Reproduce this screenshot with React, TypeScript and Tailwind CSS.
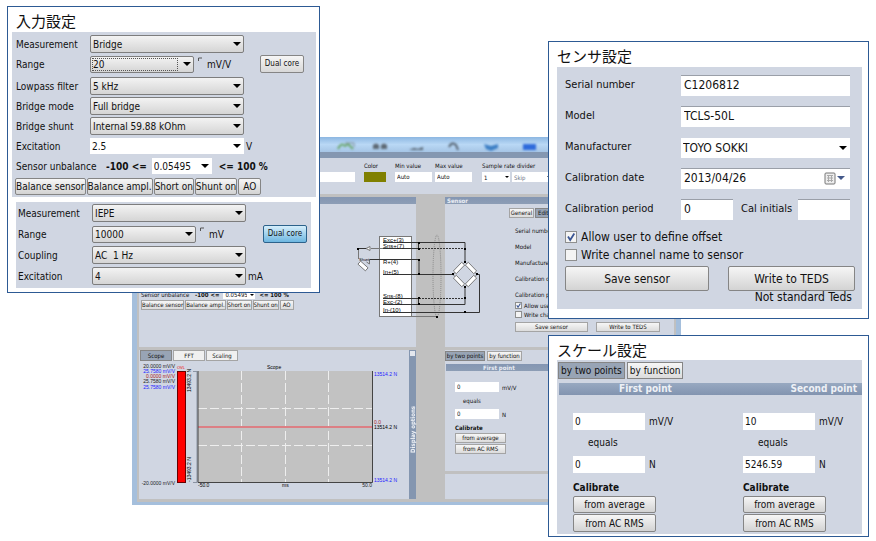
import { useId, useState } from 'react';
import type { ReactNode } from 'react';

const buttonLook = 'border border-[#858585] rounded-[2px] bg-linear-to-b from-[#f6f6f6] to-[#d3d3d3] whitespace-nowrap';
const miniButton = 'h-[10px] border border-[#a4a4a4] bg-linear-to-b from-[#f6f6f6] to-[#dcdcdc] leading-[8px] whitespace-nowrap';
const miniInput = 'h-[10px] min-w-0 bg-white px-[2px] leading-[10px]';

function Combo({ id, label, value, options = [], className = '', plain = false, focused = false, mini = false }: any) {
  return (
    <div className={`relative ${className}`}>
      <select
        id={id}
        aria-label={label}
        defaultValue={value}
        className={`block h-full w-full appearance-none whitespace-pre pl-[2px] outline-none ${mini ? 'pr-2' : 'pr-4'} ${
          plain ? 'bg-white' : 'rounded-[2px] border border-[#7d7d7d] bg-linear-to-b from-[#f3f3f3] to-[#d5d5d5]'
        }`}
      >
        <option>{value}</option>
        {options.map((o: string) => (
          <option key={o}>{o}</option>
        ))}
      </select>
      {focused && <span className="pointer-events-none absolute inset-y-[2px] left-[2px] right-4 border border-dotted border-[#555]" />}
      <svg
        viewBox="0 0 8 4"
        className={`pointer-events-none absolute top-1/2 -translate-y-1/2 ${mini ? 'right-[1px] h-[2px] w-1' : 'right-[3px] h-1 w-2'}`}
      >
        <path d="M0 0h8L4 4z" fill="#000" />
      </svg>
    </div>
  );
}

function Tick({ label, on = false, mini = false }: { label: string; on?: boolean; mini?: boolean }) {
  const id = useId();
  return (
    <div className={`flex items-center ${mini ? 'h-[9px] gap-[2px]' : 'h-[18px] gap-1 text-[12px]'}`}>
      <span className={`relative shrink-0 ${mini ? 'size-[7px]' : 'size-3'}`}>
        <input
          id={id}
          type="checkbox"
          defaultChecked={on}
          className="peer block size-full appearance-none border border-[#8e8f8f] bg-[#f4f4f4]"
        />
        <svg viewBox="0 0 12 12" className="pointer-events-none absolute inset-0 hidden size-full peer-checked:block">
          <path d="M3 5.5 5.2 9 9.3 2.5" fill="none" stroke="#3b5694" strokeWidth="1.8" />
        </svg>
      </span>
      <label htmlFor={id} className="whitespace-nowrap">{label}</label>
    </div>
  );
}

function Card({ title, className, children }: { title: string; className: string; children: ReactNode }) {
  return (
    <section className={`absolute border border-[#2d5a94] bg-white ${className}`}>
      {children}
      <h2 className="order-first text-[15px] leading-[18px]">{title}</h2>
    </section>
  );
}

function SettingRow({ label, value, options, unit, range, plain, focused, pressed, className = '' }: any) {
  const id = useId();
  return (
    <div className={`flex h-[18px] items-center ${className}`}>
      <label htmlFor={id} className="w-[74px] shrink-0 whitespace-nowrap">{label}</label>
      <Combo
        id={id}
        value={value}
        options={options}
        plain={plain}
        focused={focused}
        className={range ? 'h-[17px] w-[104px]' : plain ? 'h-4 w-[154px]' : 'h-[18px] w-[154px]'}
      />
      {range && (
        <svg viewBox="0 0 5 6" className="mb-2 ml-1 h-[6px] w-[5px]">
          <path d="M.5 4V1H4" fill="none" stroke="#555" />
        </svg>
      )}
      {unit && <span className={range ? 'ml-1' : 'ml-[2px]'}>{unit}</span>}
      {range && (
        <button
          className={`ml-auto h-[18px] w-11 rounded-[2px] border text-[8px] whitespace-nowrap ${
            pressed
              ? 'border-[#2c628b] bg-linear-to-b from-[#d5eefb] to-[#6cb6e0]'
              : 'border-[#858585] bg-linear-to-b from-[#f6f6f6] to-[#d8d8d8]'
          }`}
        >
          Dual core
        </button>
      )}
    </div>
  );
}

function InputSettings() {
  return (
    <Card title={'入力設定'} className="left-[7px] top-[6px] flex w-[calc(50%-125px)] flex-col px-1 pb-1 pt-[6px] [&>h2]:pl-1">
      <div className="mr-[-1px] mt-[1px] flex flex-col gap-[2px] bg-[#d0d6e2] pb-[2px] pl-1 pr-3 pt-[3px] text-[10px]">
        <SettingRow label="Measurement" value="Bridge" options={['IEPE', 'Voltage']} />
        <SettingRow label="Range" value="20" options={['10', '2']} unit="mV/V" range focused className="mb-[2px]" />
        <SettingRow label="Lowpass filter" value="5 kHz" options={['10 kHz']} />
        <SettingRow label="Bridge mode" value="Full bridge" options={['Half bridge']} />
        <SettingRow label="Bridge shunt" value="Internal 59.88 kOhm" />
        <SettingRow label="Excitation" value="2.5" options={['5', '10']} unit="V" plain />
        <div className="flex h-[18px] items-center whitespace-nowrap">
          <span className="w-[90px]">Sensor unbalance</span>
          <b>-100 &lt;=</b>
          <Combo label="Sensor unbalance" value="0.05495" plain className="ml-[5px] h-4 w-[60px]" />
          <b className="ml-[7px]">&lt;= 100 %</b>
        </div>
        <div className="-ml-[1px] flex h-[18px] items-center gap-[1px]">
          {['Balance sensor', 'Balance ampl.', 'Short on', 'Shunt on', 'AO'].map((t) => (
            <button key={t} className={`h-[17px] last:px-1 ${buttonLook}`}>{t}</button>
          ))}
        </div>
      </div>
      <div className="ml-1 mr-1 mt-[5px] flex flex-col gap-[3px] bg-[#d0d6e2] pb-[3px] pl-[2px] pr-1 pt-[2px] text-[10px]">
        <SettingRow label="Measurement" value="IEPE" options={['Bridge']} />
        <SettingRow label="Range" value="10000" options={['5000']} unit="mV" range pressed />
        <SettingRow label="Coupling" value={'AC\u00a0 1 Hz'} options={['DC']} />
        <SettingRow label="Excitation" value="4" options={['8']} unit="mA" />
      </div>
    </Card>
  );
}

function SensorSettings() {
  const line = 'flex h-[21px] items-center';
  const name = 'w-[116px] shrink-0 whitespace-nowrap';
  const box = 'h-[21px] min-w-0 border-t border-[#9a9fa8] bg-white px-[3px] pb-[2px] text-[12px]';
  return (
    <Card title="センサ設定" className="right-[7px] top-[41px] flex w-[calc(50%-117px)] flex-col px-2 pb-[9px] pt-[6px]">
      <div className="mr-[-2px] mt-[1px] bg-[#d0d6e2] pb-[6px] pl-2 pr-[7px] pt-2 text-[11px]">
        <div className="mr-[5px] flex flex-col gap-[10px]">
          <div className={line}>
            <label htmlFor="serial" className={name}>Serial number</label>
            <input id="serial" defaultValue="C1206812" className={`flex-1 ${box}`} />
          </div>
          <div className={line}>
            <label htmlFor="model" className={name}>Model</label>
            <input id="model" defaultValue="TCLS-50L" className={`flex-1 ${box}`} />
          </div>
          <div className={line}>
            <label htmlFor="maker" className={name}>Manufacturer</label>
            <Combo id="maker" value="TOYO SOKKI" plain className="h-5 flex-1 text-[12px]" />
          </div>
          <div className={line}>
            <label htmlFor="caldate" className={name}>Calibration date</label>
            <div className="relative flex-1">
              <input id="caldate" defaultValue="2013/04/26" className={`block w-full ${box}`} />
              <svg viewBox="0 0 22 13" className="absolute right-[4px] top-1 h-[13px] w-[22px]">
                <rect x="1" y="1" width="10" height="11" rx="1" fill="#eee" stroke="#777" />
                <path d="M3 3.5h6M3 6h6M3 8.5h6M4.5 3v7M7.5 3v7" stroke="#aaa" />
                <path d="M13 4h8l-4 4z" fill="#44598a" />
              </svg>
            </div>
          </div>
          <div className={line}>
            <label htmlFor="calperiod" className={name}>Calibration period</label>
            <input id="calperiod" defaultValue="0" className={`w-[52px] ${box}`} />
            <label htmlFor="initials" className="ml-2 w-[57px] whitespace-nowrap">Cal initials</label>
            <input id="initials" className={`flex-1 ${box}`} />
          </div>
        </div>
        <div className="mt-2">
          <Tick label="Allow user to define offset" on />
          <Tick label="Write channel name to sensor" />
        </div>
        <div className="mt-[2px] flex justify-between text-[12px]">
          <button className={`h-[25px] w-[144px] ${buttonLook}`}>Save sensor</button>
          <button className={`h-[25px] w-[127px] ${buttonLook}`}>Write to TEDS</button>
        </div>
        <p className="mr-[3px] text-right text-[12px] leading-[12px]">Not standard Teds</p>
      </div>
    </Card>
  );
}

function ScalePoint({ first, second, name }: { first: string; second: string; name: string }) {
  const box = 'h-[17px] w-[72px] bg-white px-[2px]';
  return (
    <div className="flex w-[100px] flex-col">
      <div className="flex items-center gap-1">
        <input aria-label={`${name} input`} defaultValue={first} className={box} />
        mV/V
      </div>
      <span className="my-[5px] ml-[15px] leading-4">equals</span>
      <div className="flex items-center gap-1">
        <input aria-label={`${name} value`} defaultValue={second} className={box} />
        N
      </div>
      <b className="mb-[1px] mt-[7px] leading-[15px]">Calibrate</b>
      <button className={`mb-[1px] h-[17px] w-[83px] ${buttonLook}`}>from average</button>
      <button className={`h-[18px] w-[83px] ${buttonLook}`}>from AC RMS</button>
    </div>
  );
}

function ScaleSettings() {
  const [mode, setMode] = useState('by two points');
  return (
    <Card title="スケール設定" className="right-[7px] top-[335px] flex w-[calc(50%-117px)] flex-col px-2 pb-[2px] pt-[6px]">
      <div className="mr-[-2px] bg-[#d0d6e2] pb-[2px] pt-[2px] text-[10px]">
        <div className="ml-[1px] flex gap-[2px]">
          {['by two points', 'by function'].map((m) => (
            <button
              key={m}
              onClick={() => setMode(m)}
              className={`h-[17px] border border-[#858585] px-[2px] whitespace-nowrap ${
                mode === m ? 'bg-[#98a4b5]' : 'bg-linear-to-b from-[#f6f6f6] to-[#dcdcdc]'
              }`}
            >
              {m}
            </button>
          ))}
        </div>
        <div className="ml-[2px] mt-1 flex justify-between bg-linear-to-b from-[#98a9c1] to-[#8294b0] pl-[60px] pr-[5px] font-bold leading-[12px] text-[#eef1f6]">
          <span>First point</span>
          <span>Second point</span>
        </div>
        <div className="ml-4 mr-[19px] mt-[18px] flex justify-between">
          <ScalePoint name="First point" first="0" second="0" />
          <ScalePoint name="Second point" first="10" second="5246.59" />
        </div>
      </div>
    </Card>
  );
}

function BridgeDiagram() {
  return (
    <svg viewBox="350 225 140 100" className="absolute left-[213px] top-[73px] h-[100px] w-[140px] font-['Liberation_Sans',sans-serif] text-[6px]">
      <rect x="379.5" y="236.5" width="32" height="80" fill="#fff" stroke="#777" />
      <ellipse cx="437" cy="276" rx="4" ry="41" fill="none" stroke="#888" strokeDasharray="1 1" />
      <g fill="none" stroke="#333">
        <path d="M383 242.5h82V262M418.500 242v7M383 248.500h36" />
        <path d="M371 248.500h12M358.500 249v10" stroke="#777" />
        <path d="M358 248.500h8" />
        <path d="M370 259.500h49v15M383 274.500h70" />
        <path d="M383 298.500h36M383 304.500h82V287M418.500 298v7M383 312.500h96.500V274.500h-3" />
        <path d="M412 316.500h24" stroke="#777" />
        <path d="M419 248.500h46M419 298.500h46" strokeDasharray="2 1" />
        <path d="M369.500 259v5l-3-2" stroke="#777" />
        <path d="m465 262-12 12.500 12 12.500 12-12.500z" stroke="#777" />
      </g>
      <path d="m366 248.500 4-2v4z" fill="#fff" stroke="#777" />
      <g fill="#fff" stroke="#666" strokeWidth=".8">
        <rect x="-6" y="-2" width="12" height="4" transform="translate(459 268) rotate(-46)" />
        <rect x="-6" y="-2" width="12" height="4" transform="translate(471 268) rotate(46)" />
        <rect x="-6" y="-2" width="12" height="4" transform="translate(459 281) rotate(46)" />
        <rect x="-6" y="-2" width="12" height="4" transform="translate(471 281) rotate(-46)" />
        <rect x="-5" y="-2" width="10" height="4" transform="translate(363 266) rotate(42)" />
      </g>
      {[[358, 249], [419, 243], [419, 249], [465, 249], [419, 260], [419, 274], [465, 262], [453, 274], [477, 274], [465, 287], [419, 298], [465, 298], [419, 304], [465, 312], [437, 317]].map(([x, y]) => (
        <rect key={`${x}-${y}`} x={x - 1} y={y - 1} width="2" height="2" />
      ))}
      <text x="383" y="242">Exc+(3)</text>
      <text x="383" y="248">Sns+(7)</text>
      <text x="383" y="264">R+(4)</text>
      <text x="383" y="274">In+(5)</text>
      <text x="383" y="298">Sns-(8)</text>
      <text x="383" y="304">Exc-(2)</text>
      <text x="383" y="312">In-(10)</text>
      <text x="359" y="261" fontSize="4">Shunt</text>
    </svg>
  );
}

function ScopeChart() {
  return (
    <svg viewBox="139 361 270 138" className="h-[138px] w-[270px] font-['Liberation_Sans',sans-serif] text-[5px]">
      <g textAnchor="end" fill="#222">
        <text x="175" y="368">20.0000 mV/V</text>
        <text x="175" y="373" fill="#22f">25.7580 mV/V</text>
        <text x="175" y="378" fill="#a22">0.0000 mV/V</text>
        <text x="175" y="383">25.7580 mV/V</text>
        <text x="175" y="389" fill="#22f">25.7580 mV/V</text>
        <text x="175" y="485">-20.0000 mV/V</text>
        <text x="372" y="487">50.0</text>
      </g>
      <text x="177" y="369" fill="#e00" fontSize="4">OVL</text>
      <rect x="177.500" y="371.500" width="8" height="111" fill="#f00" stroke="#600" />
      <text transform="translate(191 392) rotate(-90)">13493.2 N</text>
      <text transform="translate(191 482) rotate(-90)">-13493.2 N</text>
      <path d="M193 371.500h4v111h-4" fill="none" stroke="#8b94a3" />
      <rect x="198" y="371" width="174" height="111" fill="#c2c2c2" />
      <path d="M198 408.500h174M198 445.500h174M241.500 371v111M285.500 371v111M328.500 371v111" stroke="#eee" strokeDasharray="9 3" />
      <path d="M198 427h174" stroke="#dc7f84" strokeWidth="2" />
      <path d="M198 371v111.500h174.500V371" fill="none" stroke="#444" />
      <text x="267" y="369">Scope</text>
      <text x="198" y="487">-50.0</text>
      <text x="282" y="487">ms</text>
      <text x="374" y="376" fill="#22f">13514.2 N</text>
      <text x="374" y="424" fill="#a22">0.0</text>
      <text x="374" y="429">13514.2 N</text>
      <text x="374" y="482" fill="#22f">13514.2 N</text>
    </svg>
  );
}

function ToolbarIcons() {
  return (
    <svg viewBox="320 137 228 15" className="absolute left-[188px] top-0 h-[15px] w-[228px] blur-[1px]">
      <path d="M338 149q3-7 7-3l3-2 5 5" fill="none" stroke="#6ba86f" strokeWidth="2" />
      <path d="M345 143h9v4" fill="none" stroke="#7c8c94" />
      <path d="M373 145q3-3 6 0v4h-6zM381 145q3-3 6 0v4h-6z" fill="#5d6974" />
      <path d="M409 150l5-2 4 1 5-2v3z" fill="#55626e" />
      <path d="M449 147q3-6 7-2l2 5" fill="none" stroke="#53606e" strokeWidth="2" />
      <path d="M484 144l7 2 7-2v4l-7 3-5-2z" fill="#3d7fc4" />
      <path d="M523 144h13v6h-13z" fill="#2f6bdb" />
    </svg>
  );
}

function MeasurementWindow() {
  const [tab, setTab] = useState('Scope');
  const bar = 'bg-linear-to-b from-[#8496b2] to-[#8c9db5] leading-[7px] font-bold text-[#e9edf4]';
  return (
    <main className="absolute left-[132px] right-[195px] top-[137px] bg-[#a5bfdc] text-[6px] leading-[9px]">
      <header className="relative h-[15px] bg-linear-to-b from-[#8db7e2] via-[#b9d8f5] to-[#a6c5e5]">
        <ToolbarIcons />
      </header>
      <div className="relative mx-[5px] bg-[#c0c0c0] px-[2px] pb-[3px]">
        <div className="h-[6px] bg-[#8497b1]" />
        <div className="flex h-9 items-start gap-[3px] bg-[#d0d6e2] pt-[3px]">
          <input aria-label="Channel name" className={`mt-[11px] flex-1 ${miniInput}`} />
          <div className="ml-[6px] mr-[6px] flex flex-col gap-[2px]">
            Color
            <button aria-label="Channel color" className="h-[10px] w-[22px] bg-[#808000]" />
          </div>
          <label className="flex w-[37px] flex-col gap-[2px] whitespace-nowrap">
            Min value
            <input defaultValue="Auto" className={miniInput} />
          </label>
          <label className="mr-[7px] flex w-[37px] flex-col gap-[2px] whitespace-nowrap">
            Max value
            <input defaultValue="Auto" className={miniInput} />
          </label>
          <div className="flex w-[192px] flex-col gap-[2px] whitespace-nowrap">
            Sample rate divider
            <div className="flex gap-[2px]">
              <Combo label="Sample rate divider" value="1" plain mini className="h-[10px] w-7" />
              <Combo label="Skip" value="Skip" plain mini className="h-[10px] w-10 text-gray-500" />
            </div>
          </div>
        </div>

        <div className="mt-[3px] flex gap-[29px]">
          <div className="flex h-[150px] w-[277px] flex-col bg-[#d0d6e2]">
            <div className={`h-[7px] ${bar}`} />
            <div className="mt-auto flex items-center whitespace-nowrap pl-[2px]">
              <span className="w-[54px]">Sensor unbalance</span>
              <b>-100 &lt;=</b>
              <Combo label="Unbalance" value="0.05495" plain mini className="mx-1 h-[9px] w-8" />
              <b>&lt;= 100 %</b>
            </div>
            <div className="mb-[37px] mt-[1px] flex gap-[1px] pl-[2px]">
              {['Balance sensor', 'Balance ampl.', 'Short on', 'Shunt on', 'AO'].map((t) => (
                <button key={t} className={`last:px-[2px] ${miniButton}`}>{t}</button>
              ))}
            </div>
          </div>
          <div className="flex h-[150px] flex-1 flex-col bg-[#d0d6e2]">
            <div className={`h-[7px] pl-[2px] ${bar}`}>Sensor</div>
            <div className="ml-[64px] mt-1 flex gap-[1px]">
              <button className={`w-[25px] ${miniButton}`}>General</button>
              <button className="h-[10px] w-[25px] border border-[#858585] bg-[#98a4b5] pl-[2px] text-left leading-[8px]">Edit</button>
            </div>
            <div className="ml-[70px] mt-2 flex flex-col gap-[7px] whitespace-nowrap leading-[9px]">
              {['Serial number', 'Model', 'Manufacturer', 'Calibration date', 'Calibration period'].map((t) => (
                <span key={t}>{t}</span>
              ))}
            </div>
            <div className="ml-[70px] mt-[2px]">
              <Tick label="Allow user to define offset" on mini />
              <Tick label="Write channel name to sensor" mini />
            </div>
            <div className="ml-[70px] mt-[3px] flex gap-2">
              <button className={`w-[73px] ${miniButton}`}>Save sensor</button>
              <button className={`w-[64px] ${miniButton}`}>Write to TEDS</button>
            </div>
          </div>
        </div>

        <div className="mt-[3px] flex gap-[29px]">
          <div className="flex w-[277px] bg-[#d0d6e2]">
            <div className="flex w-[270px] flex-col">
              <div className="ml-[1px] flex gap-[1px]">
                {['Scope', 'FFT', 'Scaling'].map((t) => (
                  <button
                    key={t}
                    onClick={() => setTab(t)}
                    className={`h-[11px] w-8 border leading-[9px] ${
                      tab === t ? 'border-[#858585] bg-[#98a4b5]' : 'border-[#a4a4a4] bg-[#f0f0f0]'
                    }`}
                  >
                    {t}
                  </button>
                ))}
              </div>
              <ScopeChart />
            </div>
            <button className="flex w-[7px] flex-col items-center bg-[#8496b0] pt-[1px]">
              <span className="size-[5px] bg-[#e3e7ee]" />
              <span className="mt-[50px] rotate-180 whitespace-nowrap font-bold leading-[7px] text-[#eef1f6] [writing-mode:vertical-rl]">Display options</span>
            </button>
          </div>
          <div className="flex flex-1 flex-col gap-[3px]">
            <div className="h-[121px] bg-[#d0d6e2] pt-[1px]">
              <div className="flex gap-[2px]">
                <button className="h-[10px] w-10 border border-[#858585] bg-[#98a4b5] leading-[8px] whitespace-nowrap">by two points</button>
                <button className={`w-[35px] ${miniButton}`}>by function</button>
              </div>
              <div className={`ml-[1px] mt-[3px] pl-[37px] ${bar}`}>First point</div>
              <div className="ml-[10px] mt-[11px] flex w-[80px] flex-col">
                <div className="flex items-center gap-[3px]">
                  <input aria-label="First input" defaultValue="0" className={`w-11 ${miniInput}`} />
                  mV/V
                </div>
                <span className="my-1 ml-2">equals</span>
                <div className="flex items-center gap-[3px]">
                  <input aria-label="First value" defaultValue="0" className={`w-11 ${miniInput}`} />
                  N
                </div>
                <b className="mb-[1px] mt-1">Calibrate</b>
                <button className={`mb-[1px] w-[51px] ${miniButton}`}>from average</button>
                <button className={`w-[51px] ${miniButton}`}>from AC RMS</button>
              </div>
            </div>
            <div className="flex-1 bg-[#d0d6e2]" />
          </div>
        </div>
        <BridgeDiagram />
      </div>
      <div className="h-[3px]" />
    </main>
  );
}

export default function App() {
  return (
    <div className="relative min-h-screen overflow-hidden bg-white font-['DejaVu_Sans_Condensed','Noto_Sans_CJK_JP',sans-serif] text-[#111]">
      <MeasurementWindow />
      <InputSettings />
      <SensorSettings />
      <ScaleSettings />
    </div>
  );
}
